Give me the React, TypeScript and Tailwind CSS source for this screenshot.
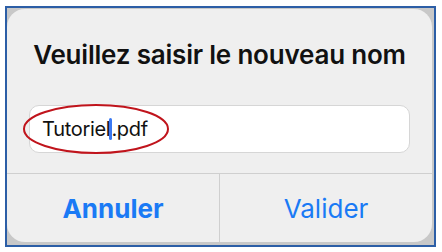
export default function App() {
  return (
    <div className="w-[442px] h-[252px] bg-white pl-[5px] pt-[6px]" style={{ fontFamily: "Inter, 'Liberation Sans', sans-serif" }}>
      <div className="relative w-[431px] h-[241px] border-2 border-[#2c5ea6] bg-[#c8c8c8] pt-px pr-[2px] pb-[3px]">
        <div className="h-full rounded-[18px] bg-[#efefef] flex flex-col">
          <div className="pt-[30px] text-center text-[26px] leading-[32px] font-semibold text-[#111] tracking-[-0.2px]">
            Veuillez saisir le nouveau nom
          </div>
          <div className="mt-[34px] mx-[22px] h-[48px] rounded-[10px] bg-white border border-[#d6d6d6] flex items-center pl-[12px] text-[20px] text-[#111] tracking-[-0.3px]">
            <span>Tutoriel</span>
            <span className="w-[3px] h-[22px] rounded-full bg-[#3a78f2] -mx-px"></span>
            <span>.pdf</span>
          </div>
          <div className="mt-[20px] flex-1 flex border-t border-[#cfcfcf]">
            <div className="flex-1 flex items-center justify-center text-[26px] font-bold text-[#1a7af5] border-r border-[#cfcfcf]">
              Annuler
            </div>
            <div className="flex-1 flex items-center justify-center text-[26px] text-[#1a7af5]">
              Valider
            </div>
          </div>
        </div>
        <svg className="absolute left-[15px] top-[95px]" width="148" height="52" viewBox="0 0 148 52">
          <ellipse cx="74" cy="26" rx="72" ry="24" fill="none" stroke="#c0141c" strokeWidth="2" />
        </svg>
      </div>
    </div>
  );
}
